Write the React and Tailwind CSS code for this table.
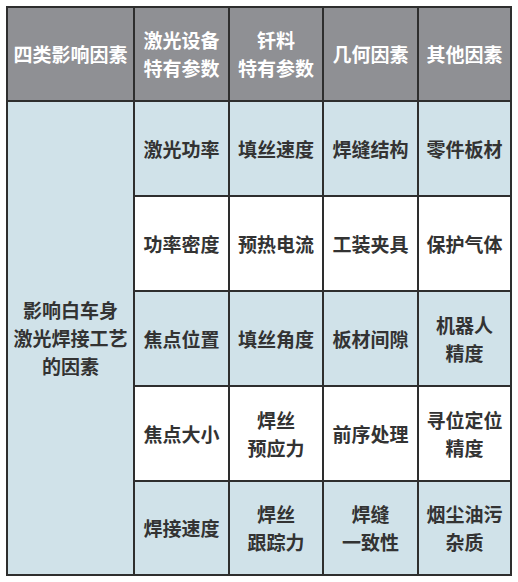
import React from 'react'

const headers = ['四类影响因素', ['激光设备', '特有参数'], ['钎料', '特有参数'], '几何因素', '其他因素']

const rows = [
    ['激光功率', '填丝速度', '焊缝结构', '零件板材'],
    ['功率密度', '预热电流', '工装夹具', '保护气体'],
    ['焦点位置', '填丝角度', '板材间隙', ['机器人', '精度']],
    ['焦点大小', ['焊丝', '预应力'], '前序处理', ['寻位定位', '精度']],
    ['焊接速度', ['焊丝', '跟踪力'], ['焊缝', '一致性'], ['烟尘油污', '杂质']],
]

function Cell({ text, className }) {
    const lines = Array.isArray(text) ? text : [text]
    return (
        <div className={'flex flex-col items-center justify-center text-center leading-[28px] ' + className}>
            {lines.map((l) => (
                <span key={l}>{l}</span>
            ))}
        </div>
    )
}

export default function App() {
    return (
        <div className="bg-white w-[518px] h-[582px] pt-[6px] pl-[6px]"
            style={{ fontFamily: '"Noto Sans CJK SC", sans-serif' }}>
            <div className="grid grid-cols-[125px_93px_92px_93px_91px] grid-rows-[92px_93px_93px_93px_93px_92px] gap-[2px] p-[2px] bg-[#2e2e2e] w-fit text-[19px] font-bold">
                {headers.map((h, i) => (
                    <Cell key={i} text={h} className="bg-[#8f9094] text-white" />
                ))}
                <Cell text={['影响白车身', '激光焊接工艺', '的因素']} className="row-span-5 bg-[#d0e2e9] text-[#333]" />
                {rows.map((r, ri) =>
                    r.map((c, ci) => (
                        <Cell
                            key={ri + '-' + ci}
                            text={c}
                            className={(ri % 2 === 0 ? 'bg-[#d0e2e9]' : 'bg-white') + ' text-[#333]'}
                        />
                    ))
                )}
            </div>
        </div>
    )
}
